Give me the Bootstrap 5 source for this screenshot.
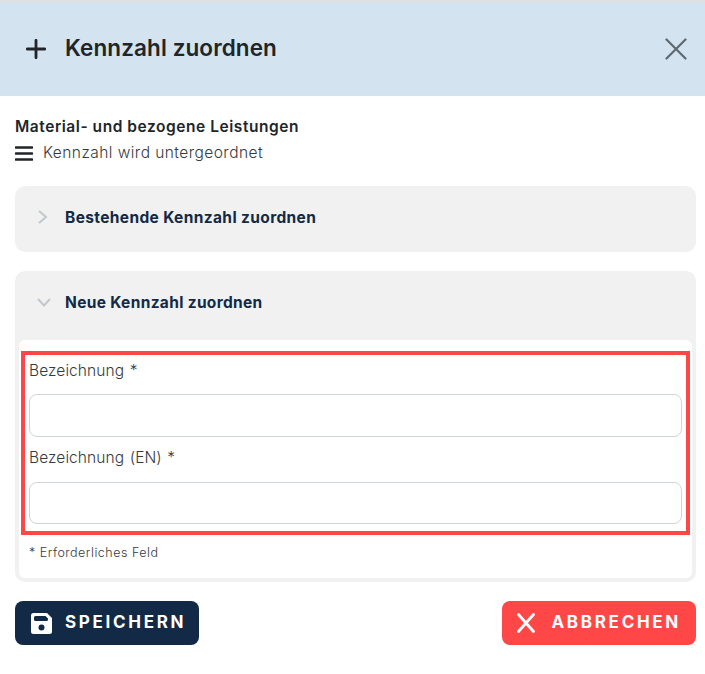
<!DOCTYPE html>
<html lang="de">
<head>
    <meta charset="UTF-8">
    <meta name="viewport" content="width=device-width, initial-scale=1.0">
    <title>Kennzahl zuordnen</title>
    <link href="https://cdn.jsdelivr.net/npm/bootstrap@5.3.0/dist/css/bootstrap.min.css" rel="stylesheet">
    <style>
        body { font-family: Inter, "Liberation Sans", sans-serif; color: #1f2a37; background: #fff; }
        .top-strip { height: 2px; background: #e0e0e0; }
        .dlg-head { height: 94px; background: #d3e4f0; padding: 0 18px 0 26px; }
        .dlg-head h1 { font-size: 22.5px; font-weight: 600; color: #212529; margin: 0 0 3px 19px; letter-spacing: .1px; }
        .dlg-intro { padding: 21px 15px 0; height: 90px; }
        .dlg-intro strong { font-size: 15.500px; font-weight: 600; color: #212529; line-height: 20px; display: block; letter-spacing: .55px; }
        .dlg-intro span { font-size: 15.500px; font-weight: 300; color: #343a40; line-height: 20px; margin-left: 10px; letter-spacing: .45px; }
        .dlg-sub { margin-top: 6px; }
        .fold { margin: 0 9px 0 15px; background: #f1f1f1; border-radius: 10px; }
        .fold-one { height: 66px; margin-bottom: 19px; }
        .fold-two { padding: 0 4px 4px; }
        .fold-title { height: 62px; padding-left: 21px; }
        .fold-two .fold-title { height: 69px; padding-left: 17px; padding-bottom: 6px; }
        .fold-title h2 { font-size: 15.500px; font-weight: 700; color: #132a46; margin: 2px 0 0 16px; letter-spacing: .37px; }
        .fold-two .fold-title h2 { margin-left: 13px; letter-spacing: .33px; }
        .fold-body { background: #fff; border-radius: 6px; padding: 11px 2px 0; height: 238px; }
        .red-frame { border: 4px solid #ff4747; height: 184px; padding: 4px 4px 0; }
        .red-frame .form-label { font-size: 15.500px; font-weight: 300; color: #343a40; margin: 1px 0 12px; line-height: 22px; letter-spacing: .1px; word-spacing: 1px; }
        .red-frame .form-control { height: 43px; border-color: #ced4da; border-radius: 8px; }
        .red-frame .form-control + .form-label { margin: 10px 0 13px; }
        .red-frame .form-label + .form-control + .form-label + .form-control { height: 42px; }
        .req-note { font-size: 12.500px; font-weight: 300; color: #343a40; padding: 10px 8px 0; line-height: 16px; letter-spacing: .5px; }
        .dlg-actions { margin: 19px 9px 0 15px; }
        .act-btn { height: 44px; border: 0; border-radius: 8px; color: #fff; font-size: 17px; font-weight: 700; letter-spacing: 2.700px; padding: 0 13px 0 16px; gap: 13px; }
        .act-save, .act-save:hover { background: #132a46; color: #fff; }
        .act-cancel, .act-cancel:hover { background: #ff4747; color: #fff; padding: 0 15px; gap: 16px; }
    </style>
</head>
<body>
    <div class="top-strip"></div>
    <div class="dlg-head d-flex align-items-center justify-content-between">
        <div class="d-flex align-items-center">
            <svg width="20" height="20" viewBox="0 0 20 20"><path d="M10 1.300V18.700M1.300 10H18.700" stroke="#212529" stroke-width="2.800" stroke-linecap="round"/></svg>
            <h1>Kennzahl zuordnen</h1>
        </div>
        <svg width="22" height="22" viewBox="0 0 22 22"><path d="M1.500 1.500L20.500 20.500M20.500 1.500L1.500 20.500" stroke="#5f686f" stroke-width="2.200" stroke-linecap="round"/></svg>
    </div>

    <div class="dlg-intro">
        <strong>Material- und bezogene Leistungen</strong>
        <div class="d-flex align-items-center dlg-sub">
            <svg width="18" height="17" viewBox="0 0 18 17"><path d="M1 2.500H17M1 8.500H17M1 14.500H17" stroke="#212529" stroke-width="2.600" stroke-linecap="round"/></svg>
            <span>Kennzahl wird untergeordnet</span>
        </div>
    </div>

    <div class="fold fold-one">
        <div class="fold-title d-flex align-items-center">
            <svg width="13" height="16" viewBox="0 0 13 16"><path d="M3 2L10 8L3 14" fill="none" stroke="#c2c7cc" stroke-width="2"/></svg>
            <h2>Bestehende Kennzahl zuordnen</h2>
        </div>
    </div>

    <div class="fold fold-two">
        <div class="fold-title d-flex align-items-center">
            <svg width="16" height="13" viewBox="0 0 16 13"><path d="M2 3L8 9.500L14 3" fill="none" stroke="#c2c7cc" stroke-width="2"/></svg>
            <h2>Neue Kennzahl zuordnen</h2>
        </div>
        <div class="fold-body">
            <div class="red-frame">
                <label class="form-label d-block" for="bez">Bezeichnung *</label>
                <input class="form-control" id="bez" type="text">
                <label class="form-label d-block" for="bezEn">Bezeichnung (EN) *</label>
                <input class="form-control" id="bezEn" type="text">
            </div>
            <div class="req-note">* Erforderliches Feld</div>
        </div>
    </div>

    <div class="dlg-actions d-flex justify-content-between">
        <button class="btn act-btn act-save d-flex align-items-center" type="button">
            <svg width="21" height="21" viewBox="0 0 21 21"><path fill-rule="evenodd" fill="#fff" d="M2.500 0H16L21 5V18.500A2.500 2.500 0 0 1 18.500 21H2.500A2.500 2.500 0 0 1 0 18.500V2.500A2.500 2.500 0 0 1 2.500 0ZM4.500 3A1.500 1.500 0 0 0 3 4.500V6.500A1.500 1.500 0 0 0 4.500 8H15.500A1.500 1.500 0 0 0 17 6.500V5.500L14.500 3ZM10.500 11.500A3 3 0 1 0 10.500 17.500A3 3 0 1 0 10.500 11.500Z"/></svg>
            SPEICHERN
        </button>
        <button class="btn act-btn act-cancel d-flex align-items-center" type="button">
            <svg width="18" height="20" viewBox="0 0 18 20"><path d="M1.500 1.500L16.500 18.500M16.500 1.500L1.500 18.500" stroke="#fff" stroke-width="2.800" stroke-linecap="round"/></svg>
            ABBRECHEN
        </button>
    </div>

    <script src="https://cdn.jsdelivr.net/npm/bootstrap@5.3.0/dist/js/bootstrap.bundle.min.js"></script>
</body>
</html>
